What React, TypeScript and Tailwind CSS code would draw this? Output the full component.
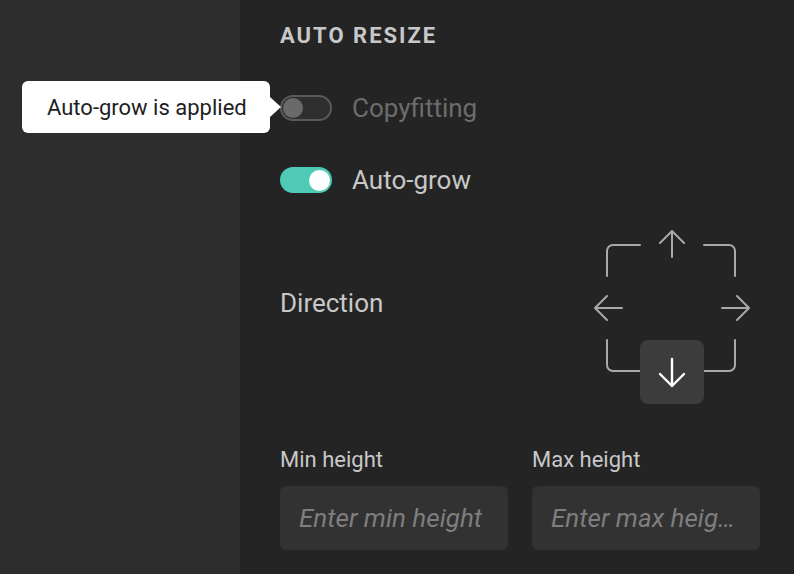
function Toggle({ on }: { on: boolean }) {
    return on ? (
        <div className="w-[52px] h-[26px] rounded-full bg-[#4ecab5] flex items-center justify-end pr-[2px]">
            <div className="w-[21px] h-[21px] rounded-full bg-white" />
        </div>
    ) : (
        <div className="w-[52px] h-[26px] rounded-full bg-[#2f2f2f] border-2 border-[#595959] flex items-center pl-[1px]">
            <div className="w-[20px] h-[20px] rounded-full bg-[#6a6a6a]" />
        </div>
    )
}

function DirectionPad() {
    const grey = "#a9a9a9"
    return (
        <div className="relative w-[168px] h-[176px] mr-[4px]">
            <svg width="168" height="176" viewBox="0 0 168 176" fill="none" strokeLinecap="round" strokeLinejoin="round">
                <g stroke={grey} strokeWidth="2">
                    <path d="M52 17H25a6 6 0 0 0-6 6v25" />
                    <path d="M116 17h25a6 6 0 0 1 6 6v25" />
                    <path d="M19 112v25a6 6 0 0 0 6 6h27" />
                    <path d="M147 112v25a6 6 0 0 1-6 6h-25" />
                    <path d="M84 29V3M72 15l12-12 12 12" />
                    <path d="M34 80H7M19 68 7 80l12 12" />
                    <path d="M134 80h27M149 68l12 12-12 12" />
                </g>
            </svg>
            <div className="absolute left-[52px] top-[112px] w-[64px] h-[64px] rounded-[8px] bg-[#3c3c3c] flex items-center justify-center">
                <svg width="30" height="32" viewBox="0 0 30 32" fill="none" stroke="#ffffff" strokeWidth="2.4" strokeLinecap="round" strokeLinejoin="round">
                    <path d="M15 3v27M3 18l12 12 12-12" />
                </svg>
            </div>
        </div>
    )
}

export default function App() {
    return (
        <div className="relative flex w-[794px] h-[574px] font-['Roboto',sans-serif]">
            <div className="w-[240px] bg-[#2d2d2d]" />
            <div className="flex-1 bg-[#242424] pl-[40px] pr-[34px] pt-[24px] flex flex-col">
                <h2 className="h-[24px] leading-[24px] text-[22px] font-bold tracking-[2px] text-[#c8c8c8]">AUTO RESIZE</h2>

                <div className="mt-[47px] flex items-center gap-[20px] h-[26px]">
                    <Toggle on={false} />
                    <span className="text-[26px] leading-[30px] text-[#6c6c6c]">Copyfitting</span>
                </div>

                <div className="mt-[46px] flex items-center gap-[20px] h-[26px]">
                    <Toggle on={true} />
                    <span className="text-[26px] leading-[30px] text-[#c8c8c8]">Auto-grow</span>
                </div>

                <div className="mt-[35px] flex justify-between items-start">
                    <span className="mt-[60px] text-[26px] leading-[30px] text-[#c8c8c8]">Direction</span>
                    <DirectionPad />
                </div>

                <div className="mt-[44px] grid grid-cols-2 gap-x-[24px]">
                    <div className="flex flex-col gap-[14px] min-w-0">
                        <label className="text-[22px] leading-[24px] text-[#c8c8c8]">Min height</label>
                        <div className="h-[64px] rounded-[6px] bg-[#323232] pl-[19px] pr-[21px] flex items-center">
                            <span className="text-[26px] italic text-[#7e7e7e] truncate">Enter min height</span>
                        </div>
                    </div>
                    <div className="flex flex-col gap-[14px] min-w-0">
                        <label className="text-[22px] leading-[24px] text-[#c8c8c8]">Max height</label>
                        <div className="h-[64px] rounded-[6px] bg-[#323232] pl-[19px] pr-[21px] flex items-center">
                            <span className="text-[26px] italic text-[#7e7e7e] truncate">Enter max height</span>
                        </div>
                    </div>
                </div>
            </div>

            <div className="absolute left-[22px] top-[81px] w-[248px] h-[52px] rounded-[6px] bg-white flex items-center pl-[25px]">
                <span className="text-[22px] text-[#1e1e1e] whitespace-nowrap">Auto-grow is applied</span>
                <div className="absolute right-[-11px] top-[16px] w-0 h-0 border-y-[10px] border-y-transparent border-l-[11px] border-l-white" />
            </div>
        </div>
    )
}
